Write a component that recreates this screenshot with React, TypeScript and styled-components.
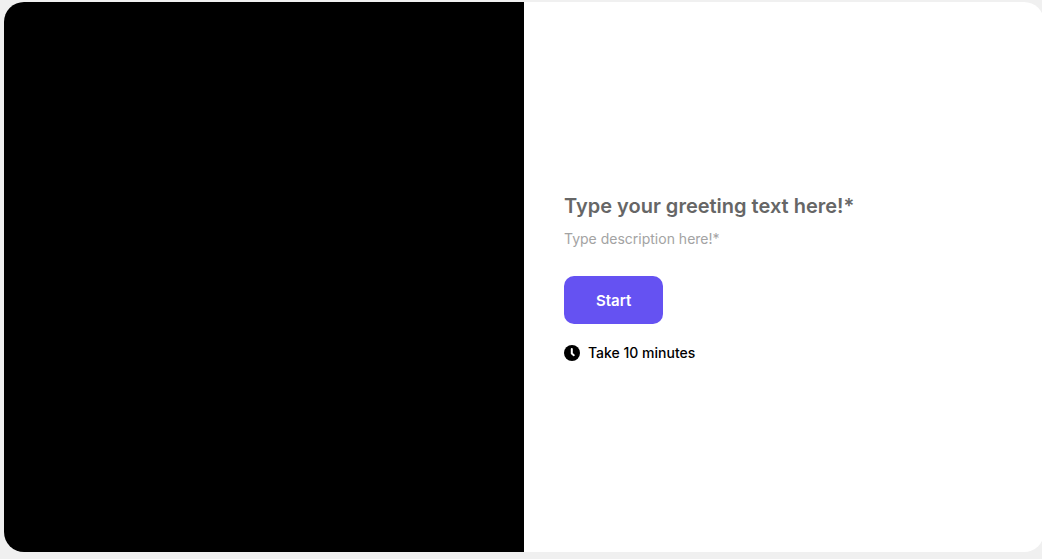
import React from "react";
import styled, { createGlobalStyle } from "styled-components";

const GlobalStyle = createGlobalStyle`
  * {
    box-sizing: border-box;
  }

  body {
    margin: 0;
    background: #f0f0f0;
    font-family: Inter, "Liberation Sans", sans-serif;
    overflow-x: hidden;
  }
`;

const Page = styled.main`
  display: flex;
  min-height: 100vh;
  padding: 2px 0 7px 4px;
`;

const Card = styled.section`
  display: grid;
  grid-template-columns: 1fr 1fr;
  flex: 1;
  margin-right: -2px;
  border-radius: 20px;
  background: #ffffff;
  overflow: hidden;
`;

const Cover = styled.div`
  background: #000000;
`;

const Content = styled.div`
  display: flex;
  flex-direction: column;
  align-items: flex-start;
  justify-content: center;
  padding: 40px;
`;

const Greeting = styled.h1`
  margin: 0 0 8px;
  color: #666666;
  font-size: 20px;
  font-weight: 600;
  line-height: 30px;
`;

const Description = styled.p`
  margin: 0 0 27px;
  color: #a3a3a3;
  font-size: 14px;
  line-height: 20px;
`;

const StartButton = styled.button`
  height: 48px;
  margin-bottom: 19px;
  padding: 0 32px;
  border: 0;
  border-radius: 10px;
  background: #6552f2;
  color: #ffffff;
  font: inherit;
  font-size: 15px;
  font-weight: 600;
  cursor: pointer;
`;

const Duration = styled.div`
  display: flex;
  align-items: center;
  gap: 8px;
  color: #000000;
  font-size: 14px;
  font-weight: 500;
  line-height: 20px;
`;

const ClockIcon = () => (
  <svg width="16" height="16" viewBox="0 0 16 16" aria-hidden="true">
    <circle cx="8" cy="8" r="8" fill="#000000" />
    <path
      d="M7.8 4v4.5l2 1.7"
      fill="none"
      stroke="#ffffff"
      strokeWidth="2"
      strokeLinecap="round"
      strokeLinejoin="round"
    />
  </svg>
);

export default function App() {
  return (
    <>
      <GlobalStyle />
      <Page>
        <Card>
          <Cover />
          <Content>
            <Greeting>Type your greeting text here!*</Greeting>
            <Description>Type description here!*</Description>
            <StartButton type="button">Start</StartButton>
            <Duration>
              <ClockIcon />
              <span>Take 10 minutes</span>
            </Duration>
          </Content>
        </Card>
      </Page>
    </>
  );
}
